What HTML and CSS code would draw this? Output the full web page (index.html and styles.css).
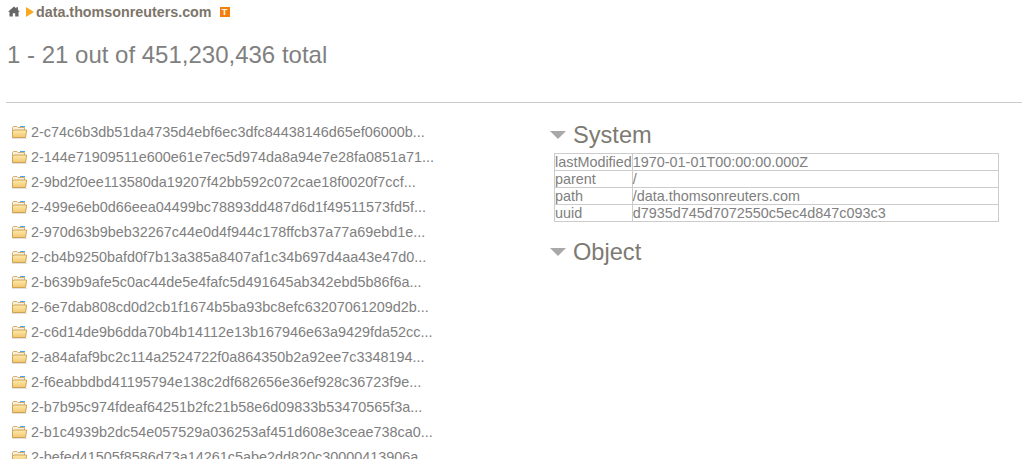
FILE: index.html
```html
<!DOCTYPE html>
<html lang="en">
<head>
  <meta charset="UTF-8">
  <title>data.thomsonreuters.com</title>
  <link rel="stylesheet" href="styles.css">
</head>
<body>

<div class="crumbs">
  <svg class="home-icon" width="12" height="11" viewBox="0 0 13 11"><path fill="#666" d="M6.5 0 L9 2.2 L9 0.8 L10.8 0.8 L10.8 3.8 L13 5.8 L11.4 5.8 L11.4 11 L7.8 11 L7.8 7.4 L5.2 7.4 L5.2 11 L1.6 11 L1.6 5.8 L0 5.8 Z"/></svg>
  <span class="crumb-arrow"></span>
  <a class="crumb-link" href="#">data.thomsonreuters.com</a>
  <span class="type-badge">T</span>
</div>

<h1 class="total">1 - 21 out of 451,230,436 total</h1>
<hr class="divider">

<div class="columns">
  <ul class="folders">
    <li><svg class="folder-icon"><use href="#folder"/></svg>2-c74c6b3db51da4735d4ebf6ec3dfc84438146d65ef06000b...</li>
    <li><svg class="folder-icon"><use href="#folder"/></svg>2-144e71909511e600e61e7ec5d974da8a94e7e28fa0851a71...</li>
    <li><svg class="folder-icon"><use href="#folder"/></svg>2-9bd2f0ee113580da19207f42bb592c072cae18f0020f7ccf...</li>
    <li><svg class="folder-icon"><use href="#folder"/></svg>2-499e6eb0d66eea04499bc78893dd487d6d1f49511573fd5f...</li>
    <li><svg class="folder-icon"><use href="#folder"/></svg>2-970d63b9beb32267c44e0d4f944c178ffcb37a77a69ebd1e...</li>
    <li><svg class="folder-icon"><use href="#folder"/></svg>2-cb4b9250bafd0f7b13a385a8407af1c34b697d4aa43e47d0...</li>
    <li><svg class="folder-icon"><use href="#folder"/></svg>2-b639b9afe5c0ac44de5e4fafc5d491645ab342ebd5b86f6a...</li>
    <li><svg class="folder-icon"><use href="#folder"/></svg>2-6e7dab808cd0d2cb1f1674b5ba93bc8efc63207061209d2b...</li>
    <li><svg class="folder-icon"><use href="#folder"/></svg>2-c6d14de9b6dda70b4b14112e13b167946e63a9429fda52cc...</li>
    <li><svg class="folder-icon"><use href="#folder"/></svg>2-a84afaf9bc2c114a2524722f0a864350b2a92ee7c3348194...</li>
    <li><svg class="folder-icon"><use href="#folder"/></svg>2-f6eabbdbd41195794e138c2df682656e36ef928c36723f9e...</li>
    <li><svg class="folder-icon"><use href="#folder"/></svg>2-b7b95c974fdeaf64251b2fc21b58e6d09833b53470565f3a...</li>
    <li><svg class="folder-icon"><use href="#folder"/></svg>2-b1c4939b2dc54e057529a036253af451d608e3ceae738ca0...</li>
    <li><svg class="folder-icon"><use href="#folder"/></svg>2-befed41505f8586d73a14261c5abe2dd820c30000413906a...</li>
  </ul>

  <div class="details">
    <h2 class="section-title"><span class="caret"></span>System</h2>
    <table class="props">
      <tr><td>lastModified</td><td>1970-01-01T00:00:00.000Z</td></tr>
      <tr><td>parent</td><td>/</td></tr>
      <tr><td>path</td><td>/data.thomsonreuters.com</td></tr>
      <tr><td>uuid</td><td>d7935d745d7072550c5ec4d847c093c3</td></tr>
    </table>
    <h2 class="section-title"><span class="caret"></span>Object</h2>
  </div>
</div>

<svg width="0" height="0" class="defs">
  <defs>
    <linearGradient id="folder-fill" x1="0" y1="0" x2="0" y2="1">
      <stop offset="0" stop-color="#fdeaae"/>
      <stop offset="1" stop-color="#f2c76e"/>
    </linearGradient>
    <symbol id="folder" viewBox="0 0 16 14">
      <path fill="#f7f0de" d="M1 13 L1 2 L2 1 L6 1 L7 2 L14 2 L14 13 Z"/>
      <path fill="none" stroke="#d2b070" d="M1.5 12 L1.5 2.5 L2.5 1.5 L6 1.5 L7 2.5 L13.5 2.5 L13.5 5"/>
      <rect x="9" y="1" width="5" height="1" fill="#4aa3e6"/>
      <path fill="url(#folder-fill)" stroke="#cfa355" d="M1.5 12.5 L1.5 6.5 L3 5 L15.5 5 L15.5 6 L14.5 12.5 Z"/>
      <rect x="1" y="13" width="15" height="1" fill="#e2e2e2"/>
    </symbol>
  </defs>
</svg>

</body>
</html>
```

FILE: styles.css
```css
html, body {
  height: 100%;
  overflow: hidden;
}

body {
  margin: 0;
  font-family: "Liberation Sans", Arial, sans-serif;
  font-size: 14.4px;
  color: #808080;
  background: #fff;
}

.crumbs {
  display: flex;
  align-items: center;
  height: 23px;
  padding-left: 8px;
}

.home-icon {
  margin-right: 6px;
}

.crumb-arrow {
  width: 0;
  height: 0;
  border-left: 8px solid #fba81f;
  border-top: 5px solid transparent;
  border-bottom: 5px solid transparent;
  margin-right: 2px;
}

.crumb-link {
  font-weight: bold;
  font-size: 14.3px;
  color: #7d746a;
  text-decoration: none;
}

.type-badge {
  flex: none;
  width: 10px;
  height: 10px;
  margin-left: 8px;
  background: #f57f0c;
  color: #fff;
  font-size: 9px;
  font-weight: bold;
  line-height: 10px;
  text-align: center;
}

.total {
  margin: 7px 0 0 7px;
  font-size: 24px;
  font-weight: normal;
  line-height: 50px;
  color: #808080;
}

.divider {
  height: 1px;
  margin: 22px 0 0 6px;
  border: none;
  background: #ccc;
}

.columns {
  display: flex;
  padding-top: 16px;
}

.folders {
  width: 550px;
  flex: none;
  margin: 0;
  padding: 0 0 0 11px;
  box-sizing: border-box;
  list-style: none;
}

.folders li {
  display: flex;
  align-items: center;
  height: 25px;
  white-space: nowrap;
}

.folder-icon {
  width: 16px;
  height: 14px;
  margin-right: 4px;
  flex: none;
}

.details {
  flex: 1;
}

.section-title {
  display: flex;
  align-items: center;
  margin: 0;
  font-size: 23.6px;
  font-weight: normal;
  line-height: 32px;
  color: #7d7a72;
}

.caret {
  width: 0;
  height: 0;
  margin-right: 7px;
  border-top: 8px solid #a8a8a8;
  border-left: 8px solid transparent;
  border-right: 8px solid transparent;
}

.props {
  width: 445px;
  margin: 2px 0 14px 4px;
  border-collapse: collapse;
}

.props td {
  height: 16px;
  padding: 0;
  border: 1px solid #ccc;
  line-height: 16px;
}

.props td:first-child {
  width: 1px;
}

.defs {
  position: absolute;
}
```
